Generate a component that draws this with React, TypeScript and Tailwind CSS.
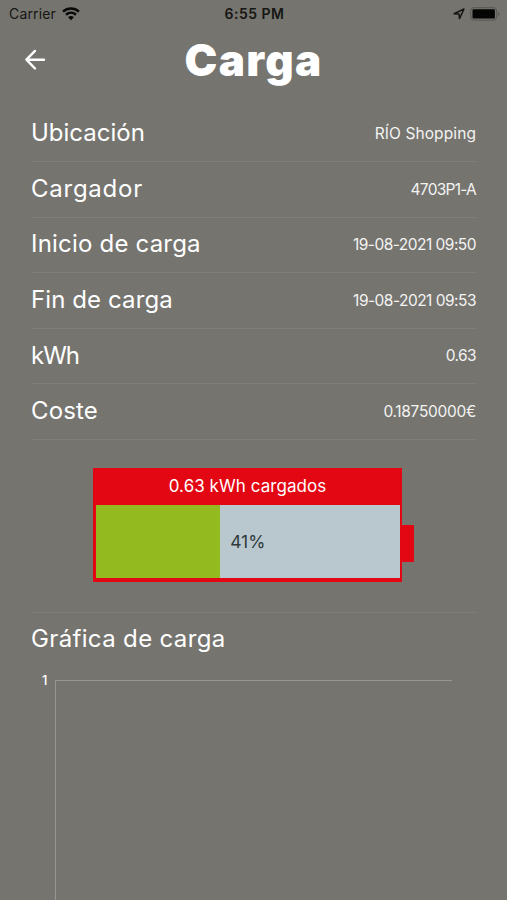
import React from 'react';

const rows = [
  { label: 'Ubicación', value: 'RÍO Shopping', labelClass: 'tracking-[0px]', valueClass: 'tracking-[0.1px]' },
  { label: 'Cargador', value: '4703P1-A', labelClass: 'tracking-[0.75px]', valueClass: 'tracking-[-0.75px]' },
  { label: 'Inicio de carga', value: '19-08-2021 09:50', labelClass: 'tracking-[0.2px]', valueClass: 'tracking-[-0.52px]' },
  { label: 'Fin de carga', value: '19-08-2021 09:53', labelClass: 'tracking-[0.1px]', valueClass: 'tracking-[-0.52px]' },
  { label: 'kWh', value: '0.63', labelClass: 'tracking-[-1px]', valueClass: 'tracking-[-0.6px]' },
  { label: 'Coste', value: '0.18750000€', labelClass: 'tracking-[0.15px]', valueClass: 'tracking-[-0.3px]' },
];

const StatusBar = () => (
  <div className="grid h-7 grid-cols-3 items-center pl-[9px] pr-[7px] text-[#161614]">
    <div className="flex items-center gap-[6px]">
      <span className="text-[14px] leading-7 tracking-[0.15px]">Carrier</span>
      <svg width="18" height="14" viewBox="0 0 18 14" fill="none" stroke="#090909" strokeWidth="2.5">
        <path d="M1 4.6C5.6.4 12.4.4 17 4.6" />
        <path d="M4 7.8c2.9-2.6 7.1-2.6 10 0" />
        <path d="M9 13.2l-2.9-3c1.7-1.5 4.1-1.5 5.8 0z" fill="#090909" stroke="none" />
      </svg>
    </div>
    <span className="text-center text-[14px] font-semibold leading-7 tracking-[0.5px]">6:55 PM</span>
    <div className="flex items-center justify-end gap-[5px]">
      <svg width="12" height="12" viewBox="0 0 12 12" fill="none" stroke="#161614" strokeWidth="1.5" strokeLinejoin="round">
        <path d="M1 5.7L11 1 6.5 10.6 6 6z" />
      </svg>
      <svg width="30" height="15" viewBox="0 0 30 15">
        <rect x="0.7" y="0.6" width="26" height="12.6" rx="3.6" fill="none" stroke="#5c5b58" strokeWidth="1.2" />
        <rect x="2.5" y="2.2" width="22.4" height="9.4" rx="1.2" fill="#050505" />
        <path d="M28 4.8c2 .8 2 3.6 0 4.4z" fill="#5c5b58" />
      </svg>
    </div>
  </div>
);

const Header = () => (
  <header className="grid h-[78.4px] grid-cols-[60px_1fr_60px] items-start">
    <svg className="ml-[24px] mt-[20px]" width="24" height="24" viewBox="0 0 24 24" fill="none" stroke="#fff" strokeWidth="2.4" strokeLinecap="round" strokeLinejoin="round">
      <path d="M20 11.7H2.6M11 2.9L2.4 11.7l8.6 8.8" />
    </svg>
    <h1 className="pt-[5px] text-center text-[44px] font-black leading-[54px] tracking-[1.3px]">Carga</h1>
  </header>
);

const Battery = () => (
  <div className="ml-[62px] mt-[28px] flex items-center">
    <div className="h-[114px] w-[309px] bg-[#e30613] px-[2.5px] pb-1">
      <div className="h-[37px] pt-px text-center text-[17px] leading-[35px] tracking-[0.05px]">0.63 kWh cargados</div>
      <div className="flex h-[73px] bg-[#b9c8ce]">
        <div className="w-[41%] bg-[#93bb1f]" />
        <span className="pl-[10px] text-[17.5px] leading-[73px] text-[#303b3b]">41%</span>
      </div>
    </div>
    <div className="mt-[57px] h-[37px] w-3 self-start bg-[#e30613]" />
  </div>
);

export default function App() {
  return (
    <div className="h-[900px] w-full overflow-hidden bg-[#75746f] font-['Inter',sans-serif] text-white">
      <StatusBar />
      <Header />
      <main className="px-[31px]">
        {rows.map((row) => (
          <div key={row.label} className="flex h-[55.6px] items-center justify-between border-b border-[#7f7e7a] pb-px">
            <span className={`text-[24px] ${row.labelClass}`}>{row.label}</span>
            <span className={`pt-px text-[15.5px] text-[#f3f3f2] ${row.valueClass}`}>{row.value}</span>
          </div>
        ))}
        <Battery />
        {/* CHART */}
        <section className="mt-[30.5px] border-t border-[#7f7e7a]">
          <h2 className="pt-[9px] text-[24px] leading-[34px] tracking-[0.35px]">Gráfica de carga</h2>
          <div className="mt-[16px] flex">
            <span className="w-6 pl-[11px] text-[13px] font-medium leading-[16px]">1</span>
            <div className="mt-[8px] h-[230px] w-[397px] border-l border-t border-[#979692]" />
          </div>
        </section>
      </main>
    </div>
  );
}
